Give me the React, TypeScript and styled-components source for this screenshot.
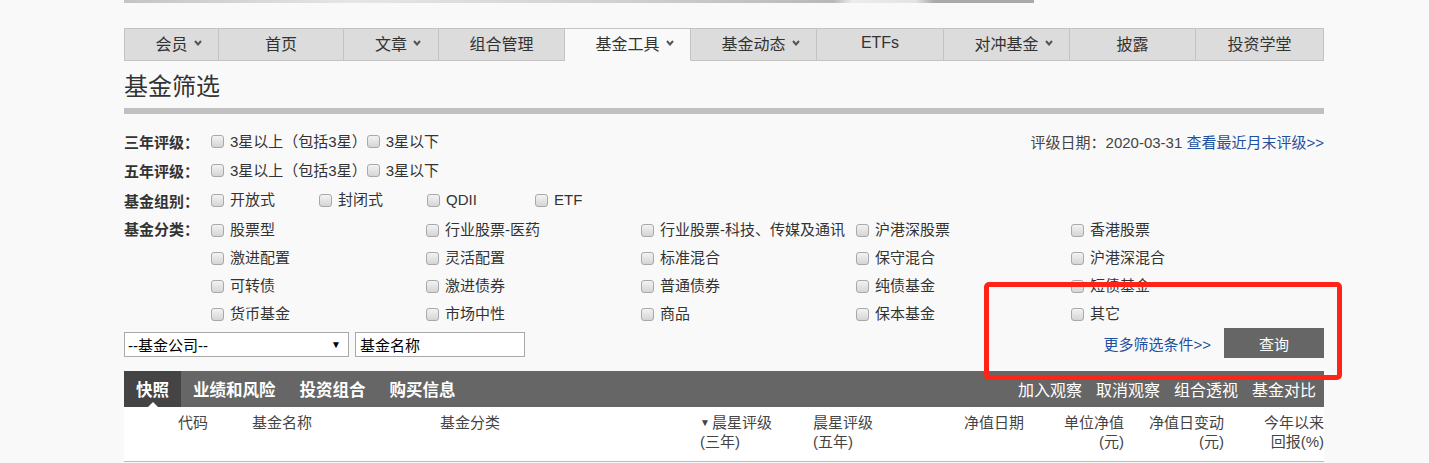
import styled, { createGlobalStyle } from "styled-components";

const GlobalStyle = createGlobalStyle`
  body {
    margin: 0;
    background: #f9f9f9;
    font-family: "Liberation Sans", "Noto Sans CJK SC", sans-serif;
    color: #333;
  }
  * { box-sizing: border-box; }
`;

const navItems = [
  { label: "会员", w: 95, drop: true },
  { label: "首页", w: 125 },
  { label: "文章", w: 95, drop: true },
  { label: "组合管理", w: 126 },
  { label: "基金工具", w: 126, drop: true, active: true },
  { label: "基金动态", w: 126, drop: true },
  { label: "ETFs", w: 127 },
  { label: "对冲基金", w: 126, drop: true },
  { label: "披露", w: 126 },
  { label: "投资学堂", w: 128 },
];

const fundTypes = [
  "股票型", "行业股票-医药", "行业股票-科技、传媒及通讯", "沪港深股票", "香港股票",
  "激进配置", "灵活配置", "标准混合", "保守混合", "沪港深混合",
  "可转债", "激进债券", "普通债券", "纯债基金", "短债基金",
  "货币基金", "市场中性", "商品", "保本基金", "其它",
];

const columns = [
  { label: "", w: 54 },
  { label: "代码", w: 74 },
  { label: "基金名称", w: 188 },
  { label: "基金分类", w: 260 },
  { label: "晨星评级", sub: "(三年)", w: 113, sort: true },
  { label: "晨星评级", sub: "(五年)", w: 151 },
  { label: "净值日期", w: 76 },
  { label: "单位净值", sub: "(元)", w: 84, right: true },
  { label: "净值日变动", sub: "(元)", w: 100, right: true },
  { label: "今年以来", sub: "回报(%)", w: 100, right: true },
];

function Caret() {
  return (
    <svg width="8" height="6" viewBox="0 0 8 6">
      <polyline points="1,1 4,4.5 7,1" fill="none" stroke="#555" strokeWidth="2" />
    </svg>
  );
}

function Option({ label }: { label: string }) {
  return (
    <OptionItem>
      <Check />
      <span>{label}</span>
    </OptionItem>
  );
}

export default function App() {
  return (
    <>
      <GlobalStyle />
      <Page>
        <Banner />
        <Nav>
          {navItems.map((n) => (
            <NavTab key={n.label} $w={n.w} $active={!!n.active} $drop={!!n.drop}>
              <span>{n.label}</span>
              {n.drop && <Caret />}
            </NavTab>
          ))}
        </Nav>
        <Title>基金筛选</Title>
        <TitleBar />

        <Filters>
          <Row $h={29}>
            <Label>三年评级：</Label>
            <Inline>
              <Option label="3星以上（包括3星）" />
              <Option label="3星以下" />
            </Inline>
            <DateInfo>
              评级日期：2020-03-31 <Link>查看最近月末评级&gt;&gt;</Link>
            </DateInfo>
          </Row>
          <Row $h={29}>
            <Label>五年评级：</Label>
            <Inline>
              <Option label="3星以上（包括3星）" />
              <Option label="3星以下" />
            </Inline>
          </Row>
          <Row $h={30}>
            <Label>基金组别：</Label>
            <OptionGrid $col={108}>
              {["开放式", "封闭式", "QDII", "ETF"].map((t) => (
                <Option key={t} label={t} />
              ))}
            </OptionGrid>
          </Row>
          <TypeRow>
            <Label>基金分类：</Label>
            <OptionGrid $col={215}>
              {fundTypes.map((t) => (
                <Option key={t} label={t} />
              ))}
            </OptionGrid>
          </TypeRow>
          <SearchRow>
            <SelectBox>
              <span>--基金公司--</span>
              <SelectArrow>▼</SelectArrow>
            </SelectBox>
            <NameInput defaultValue="基金名称" />
            <SearchRight>
              <Link>更多筛选条件&gt;&gt;</Link>
              <QueryButton>查询</QueryButton>
            </SearchRight>
          </SearchRow>
        </Filters>

        <ResultBar>
          <ResultTab $active>快照</ResultTab>
          <ResultTab>业绩和风险</ResultTab>
          <ResultTab>投资组合</ResultTab>
          <ResultTab>购买信息</ResultTab>
          <Actions>
            <span>加入观察</span>
            <span>取消观察</span>
            <span>组合透视</span>
            <span>基金对比</span>
          </Actions>
        </ResultBar>
        <TableHead>
          {columns.map((c, i) => (
            <HeadCell key={i} $w={c.w} $right={!!c.right}>
              <div>
                {c.sort && <SortMark>▼</SortMark>}
                {c.label}
              </div>
              {c.sub && <div>{c.sub}</div>}
            </HeadCell>
          ))}
        </TableHead>

        <Highlight />
      </Page>
    </>
  );
}

const Page = styled.div`
  position: relative;
  width: 1200px;
  margin-left: 124px;
`;

const Banner = styled.div`
  width: 910px;
  height: 3px;
  background: linear-gradient(
    to right,
    #c4c4c4 0%,
    #e6e6e6 25%,
    #d0d0d0 55%,
    #b8b8b8 78%,
    #ececec 80%,
    #e4e4e4 87%,
    #aaa 89%,
    #aaa 100%
  );
`;

const Nav = styled.nav`
  display: flex;
  margin-top: 25px;
  height: 33px;
`;

const NavTab = styled.div<{ $w: number; $active: boolean; $drop: boolean }>`
  width: ${(p) => p.$w}px;
  display: flex;
  align-items: center;
  justify-content: center;
  gap: 6px;
  padding-left: ${(p) => (p.$drop ? 14 : 0)}px;
  padding-bottom: 3px;
  font-size: 16px;
  color: #333;
  background: ${(p) => (p.$active ? "#f9f9f9" : "#dcdcdc")};
  border: 1px solid #c3c3c3;
  border-left: none;
  border-bottom-color: ${(p) => (p.$active ? "#f9f9f9" : "#c3c3c3")};
  &:first-child {
    border-left: 1px solid #c3c3c3;
  }
`;

const Title = styled.h1`
  margin: 11px 0 0;
  font-size: 24px;
  line-height: 30px;
  font-weight: normal;
  color: #333;
`;

const TitleBar = styled.div`
  height: 6px;
  margin-top: 6px;
  background: #c0c0c0;
`;

const Filters = styled.div`
  margin-top: 13px;
  font-size: 15px;
`;

const Row = styled.div<{ $h: number }>`
  display: flex;
  align-items: center;
  height: ${(p) => p.$h}px;
`;

const TypeRow = styled.div`
  display: flex;
  align-items: flex-start;
  padding-top: 1px;
  & > span:first-child {
    height: 28px;
    line-height: 28px;
  }
`;

const Label = styled.span`
  width: 87px;
  flex: none;
  font-weight: bold;
  color: #333;
`;

const Inline = styled.div`
  display: flex;
  gap: 0;
`;

const OptionGrid = styled.div<{ $col: number }>`
  display: grid;
  grid-template-columns: repeat(auto-fill, ${(p) => p.$col}px);
  grid-auto-rows: 28px;
  flex: 1;
`;

const OptionItem = styled.label`
  display: flex;
  align-items: center;
  gap: 6px;
  color: #333;
  white-space: nowrap;
  line-height: 18px;
`;

const Check = styled.span`
  width: 13px;
  height: 13px;
  flex: none;
  border: 1px solid #a9a9a9;
  border-radius: 3px;
  background: linear-gradient(#f3f3f3, #d5d5d5);
`;

const DateInfo = styled.div`
  margin-left: auto;
  color: #444;
`;

const Link = styled.a`
  color: #1f50a0;
  cursor: pointer;
`;

const SearchRow = styled.div`
  display: flex;
  align-items: center;
  height: 30px;
`;

const SelectBox = styled.div`
  width: 225px;
  height: 25px;
  display: flex;
  align-items: center;
  justify-content: space-between;
  padding: 0 7px 0 3px;
  margin-top: 3px;
  background: #fff;
  border: 1px solid #a9a9a9;
  font-size: 15px;
  color: #000;
`;

const SelectArrow = styled.span`
  font-size: 10px;
`;

const NameInput = styled.input`
  width: 170px;
  height: 25px;
  margin: 3px 0 0 6px;
  padding: 0 4px;
  border: 1px solid #a9a9a9;
  background: #fff;
  font: 15px "Liberation Sans", "Noto Sans CJK SC", sans-serif;
  color: #000;
  outline: none;
`;

const SearchRight = styled.div`
  margin-left: auto;
  display: flex;
  align-items: center;
  gap: 13px;
`;

const QueryButton = styled.button`
  width: 100px;
  height: 30px;
  border: none;
  background: #666;
  color: #fff;
  font: 15px "Liberation Sans", "Noto Sans CJK SC", sans-serif;
`;

const ResultBar = styled.div`
  display: flex;
  align-items: stretch;
  height: 36px;
  margin-top: 13px;
  background: #666;
`;

const ResultTab = styled.div<{ $active?: boolean }>`
  position: relative;
  display: flex;
  align-items: center;
  padding: 0 12px;
  font-size: 16.5px;
  font-weight: bold;
  color: #fff;
  background: ${(p) => (p.$active ? "#444" : "transparent")};
  &::after {
    content: "";
    display: ${(p) => (p.$active ? "block" : "none")};
    position: absolute;
    left: 50%;
    bottom: 0;
    margin-left: -5px;
    border: 5px solid transparent;
    border-bottom-color: #fff;
    border-top: none;
  }
`;

const Actions = styled.div`
  margin-left: auto;
  display: flex;
  align-items: center;
  gap: 14px;
  padding-right: 8px;
  font-size: 16px;
  color: #fff;
`;

const TableHead = styled.div`
  display: flex;
  height: 55px;
  background: #fff;
  border-bottom: 1px solid #bbb;
`;

const HeadCell = styled.div<{ $w: number; $right: boolean }>`
  width: ${(p) => p.$w}px;
  flex: none;
  padding-top: 6px;
  font-size: 15px;
  line-height: 19px;
  color: #444;
  text-align: ${(p) => (p.$right ? "right" : "left")};
`;

const SortMark = styled.span`
  font-size: 10px;
  margin-right: 2px;
  vertical-align: 2px;
`;

const Highlight = styled.div`
  position: absolute;
  left: 860px;
  top: 282px;
  width: 358px;
  height: 98px;
  border: 5px solid #ff2318;
  border-radius: 5px;
  pointer-events: none;
`;
